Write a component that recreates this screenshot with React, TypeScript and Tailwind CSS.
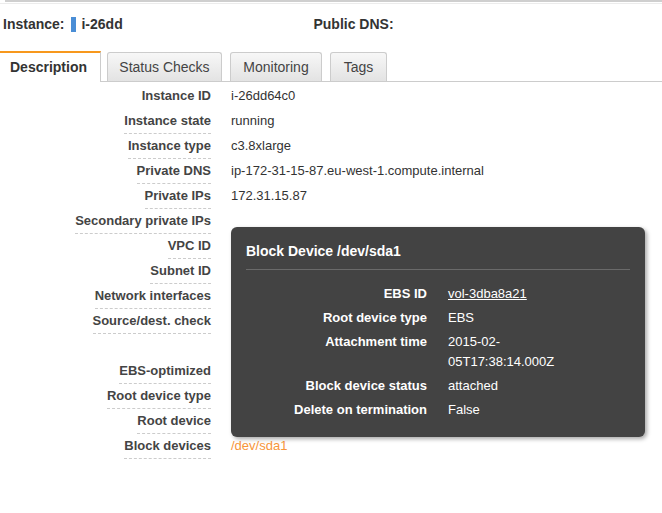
import React from "react";

type Row = { label: string; value?: React.ReactNode; plain?: boolean };

const ROWS: Row[] = [
  { label: "Instance ID", value: "i-26dd64c0", plain: true },
  { label: "Instance state", value: "running" },
  { label: "Instance type", value: "c3.8xlarge" },
  { label: "Private DNS", value: "ip-172-31-15-87.eu-west-1.compute.internal" },
  { label: "Private IPs", value: "172.31.15.87" },
  { label: "Secondary private IPs" },
  { label: "VPC ID" },
  { label: "Subnet ID" },
  { label: "Network interfaces" },
  { label: "Source/dest. check" },
  { label: "" },
  { label: "EBS-optimized" },
  { label: "Root device type" },
  { label: "Root device" },
  { label: "Block devices", value: <span className="text-[#f7953a]">/dev/sda1</span> },
];

const TABS = [
  { name: "Status Checks", w: "w-[115px]" },
  { name: "Monitoring", w: "w-[92px]" },
  { name: "Tags", w: "w-[57px]" },
];

const TIP_ROWS: { label: string; value: React.ReactNode }[] = [
  { label: "EBS ID", value: <span className="underline">vol-3dba8a21</span> },
  { label: "Root device type", value: "EBS" },
  { label: "Attachment time", value: "2015-02-05T17:38:14.000Z" },
  { label: "Block device status", value: "attached" },
  { label: "Delete on termination", value: "False" },
];

export default function App() {
  return (
    <div className="relative w-[662px] h-[513px] bg-white font-['Liberation_Sans',Arial,sans-serif] text-[#333] overflow-hidden">
      {/* top edge */}
      <div className="ml-[5px] h-[2px] bg-[#cfcfcf]" />
      <div className="mt-px h-px bg-[#ececec]" />

      {/* Header */}
      <div className="flex items-center h-[40px] pl-[3px] text-[14px] font-bold text-[#333]">
        <span>Instance:</span>
        <span className="ml-[7px] block w-[5px] h-[15px] bg-[#4a8ed6]" />
        <span className="ml-[5px] w-[43px] overflow-hidden whitespace-nowrap">i-26dd</span>
        <span className="ml-[189px]">Public DNS:</span>
      </div>

      {/* Tabs */}
      <div className="mt-[7px] flex items-end h-[31px] border-b border-[#ccc]">
        <div className="relative -mb-px h-[31px] w-[101px] border-t-2 border-[#f7981d] border-r border-r-[#ccc] bg-white flex items-center pl-[10px] text-[14px] font-bold text-[#333]">
          Description
        </div>
        {TABS.map((t, i) => (
          <div
            key={t.name}
            className={
              (i === 0 ? "ml-[6px] " : "ml-[8px] ") +
              t.w +
              " h-[29px] rounded-t-[3px] border border-b-0 border-[#ccc] bg-gradient-to-b from-[#f7f7f7] to-[#e3e3e3] flex items-center justify-center text-[14px] text-[#444]"
            }
          >
            {t.name}
          </div>
        ))}
      </div>

      {/* Description rows */}
      <div className="pt-[2px]">
        {ROWS.map((r, i) => (
          <div key={i} className="flex h-[25px] text-[13px]">
            <div className="w-[211px] flex justify-end">
              {r.label && (
                <span
                  className={
                    "font-bold text-[#444] leading-[24px] h-[25px] " +
                    (r.plain ? "" : "border-b border-dashed border-[#ccc]")
                  }
                >
                  {r.label}
                </span>
              )}
            </div>
            <div className="ml-[20px] leading-[24px] text-[#333]">{r.value}</div>
          </div>
        ))}
      </div>

      {/* Tooltip */}
      <div className="absolute left-[231px] top-[227px] w-[414px] h-[210px] rounded-[6px] bg-[#434343] shadow-[2px_2px_4px_rgba(0,0,0,0.35)] px-[15px] text-white">
        <div className="pt-[16px] pb-[9px] text-[14px] font-bold leading-[17px]">Block Device /dev/sda1</div>
        <div className="h-px bg-[#6a6a6a]" />
        <div className="pt-[12px]">
          {TIP_ROWS.map((r) => (
            <div key={r.label} className="flex py-[2px] text-[13px] leading-[20px]">
              <div className="w-[181px] text-right font-bold">{r.label}</div>
              <div className="ml-[21px] w-[125px] break-words">{r.value}</div>
            </div>
          ))}
        </div>
      </div>
    </div>
  );
}
